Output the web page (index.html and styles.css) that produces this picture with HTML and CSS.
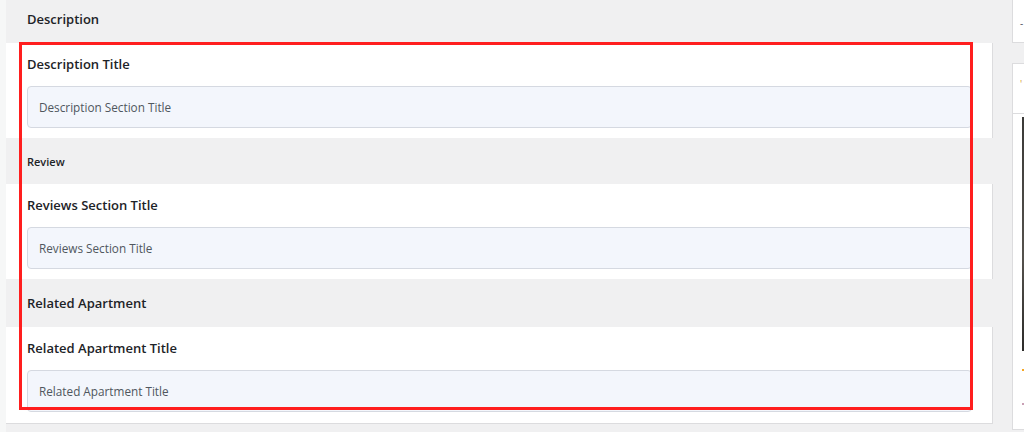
FILE: index.html
```html
<!DOCTYPE html>
<html lang="en">
<head>
<meta charset="utf-8">
<title>Section Titles</title>
<link rel="stylesheet" href="styles.css">
</head>
<body>
<div class="page">
  <div class="edge"></div>
  <main class="main">
    <div class="band band-first"><span class="band-title">Description</span></div>
    <div class="card">
      <label class="field-label">Description Title</label>
      <div class="input"><span class="placeholder">Description Section Title</span></div>
    </div>
    <div class="band band-second"><span class="band-title small">Review</span></div>
    <div class="card">
      <label class="field-label">Reviews Section Title</label>
      <div class="input"><span class="placeholder">Reviews Section Title</span></div>
    </div>
    <div class="band band-third"><span class="band-title">Related Apartment</span></div>
    <div class="card card-last">
      <label class="field-label">Related Apartment Title</label>
      <div class="input"><span class="placeholder">Related Apartment Title</span></div>
    </div>
    <div class="highlight"></div>
  </main>
  <aside class="aside">
    <div class="box box-top"><span class="glyph">-</span></div>
    <div class="box box-main">
      <div class="box-head"><span class="glyph tick">'</span></div>
      <div class="box-body">
        <div class="thumb"></div>
        <span class="dot dot-orange"></span>
        <span class="dot dot-pink"></span>
      </div>
    </div>
  </aside>
</div>
</body>
</html>
```

FILE: styles.css
```css
html, body {
  margin: 0;
  padding: 0;
}
body {
  background: #f0f0f1;
  font-family: "Open Sans", "Noto Sans", "Liberation Sans", sans-serif;
  color: #1d2327;
  width: 1024px;
  height: 432px;
  overflow: hidden;
}
.page {
  display: flex;
  height: 432px;
}
.edge {
  width: 6px;
  background: #f6f7f7;
  flex: none;
}
.main {
  position: relative;
  width: 987px;
  flex: none;
  display: flex;
  flex-direction: column;
}
.band {
  background: #f0f0f1;
  padding-left: 21px;
  display: flex;
  align-items: center;
}
.band-first { height: 43px; padding-bottom: 5px; box-sizing: border-box; }
.band-second { height: 46px; }
.band-third { height: 48px; }
.band-title {
  font-size: 13px;
  font-weight: 600;
}
.band-title.small { font-size: 11px; }
.card {
  background: #fff;
  border-right: 1px solid #dcdcde;
  padding: 12px 20px 10px 21px;
  display: flex;
  flex-direction: column;
  gap: 13px;
}
.card-last {
  border-bottom: 1px solid #dcdcde;
  padding-bottom: 11px;
}
.field-label {
  font-size: 13px;
  font-weight: 600;
  line-height: 18px;
}
.input {
  height: 42px;
  box-sizing: border-box;
  background: #f3f6fc;
  border: 1px solid #d5d9e1;
  border-radius: 4px;
  padding-left: 11px;
  display: flex;
  align-items: center;
}
.placeholder {
  font-size: 11.75px;
  color: #50575e;
}
.highlight {
  position: absolute;
  left: 13px;
  top: 42px;
  width: 954px;
  height: 368px;
  box-sizing: border-box;
  border: 3px solid #ff1e1e;
  pointer-events: none;
}
.aside {
  margin-left: 19px;
  flex: 1;
  display: flex;
  flex-direction: column;
  gap: 20px;
}
.box {
  background: #fff;
  border: 1px solid #dcdcde;
  border-right: none;
  position: relative;
}
.box-top {
  height: 44px;
  margin-top: -1px;
  box-sizing: border-box;
}
.box-main {
  height: 367px;
  box-sizing: border-box;
  display: flex;
  flex-direction: column;
}
.box-head {
  height: 49px;
  border-bottom: 1px solid #dcdcde;
  position: relative;
}
.box-body {
  flex: 1;
  position: relative;
}
.thumb {
  margin: 3px 0 0 9px;
  height: 234px;
  background: linear-gradient(#3b3a38, #55524d 60%, #2d2c2a);
}
.glyph {
  position: absolute;
  left: 7px;
  top: 16px;
  font-size: 10px;
  color: #50575e;
}
.tick { color: #d8a13a; top: 13px; }
.dot {
  position: absolute;
  left: 9px;
  width: 2px;
  height: 2px;
}
.dot-orange { top: 255px; background: #f5a623; }
.dot-pink { top: 289px; background: #c9a0b5; }
```
